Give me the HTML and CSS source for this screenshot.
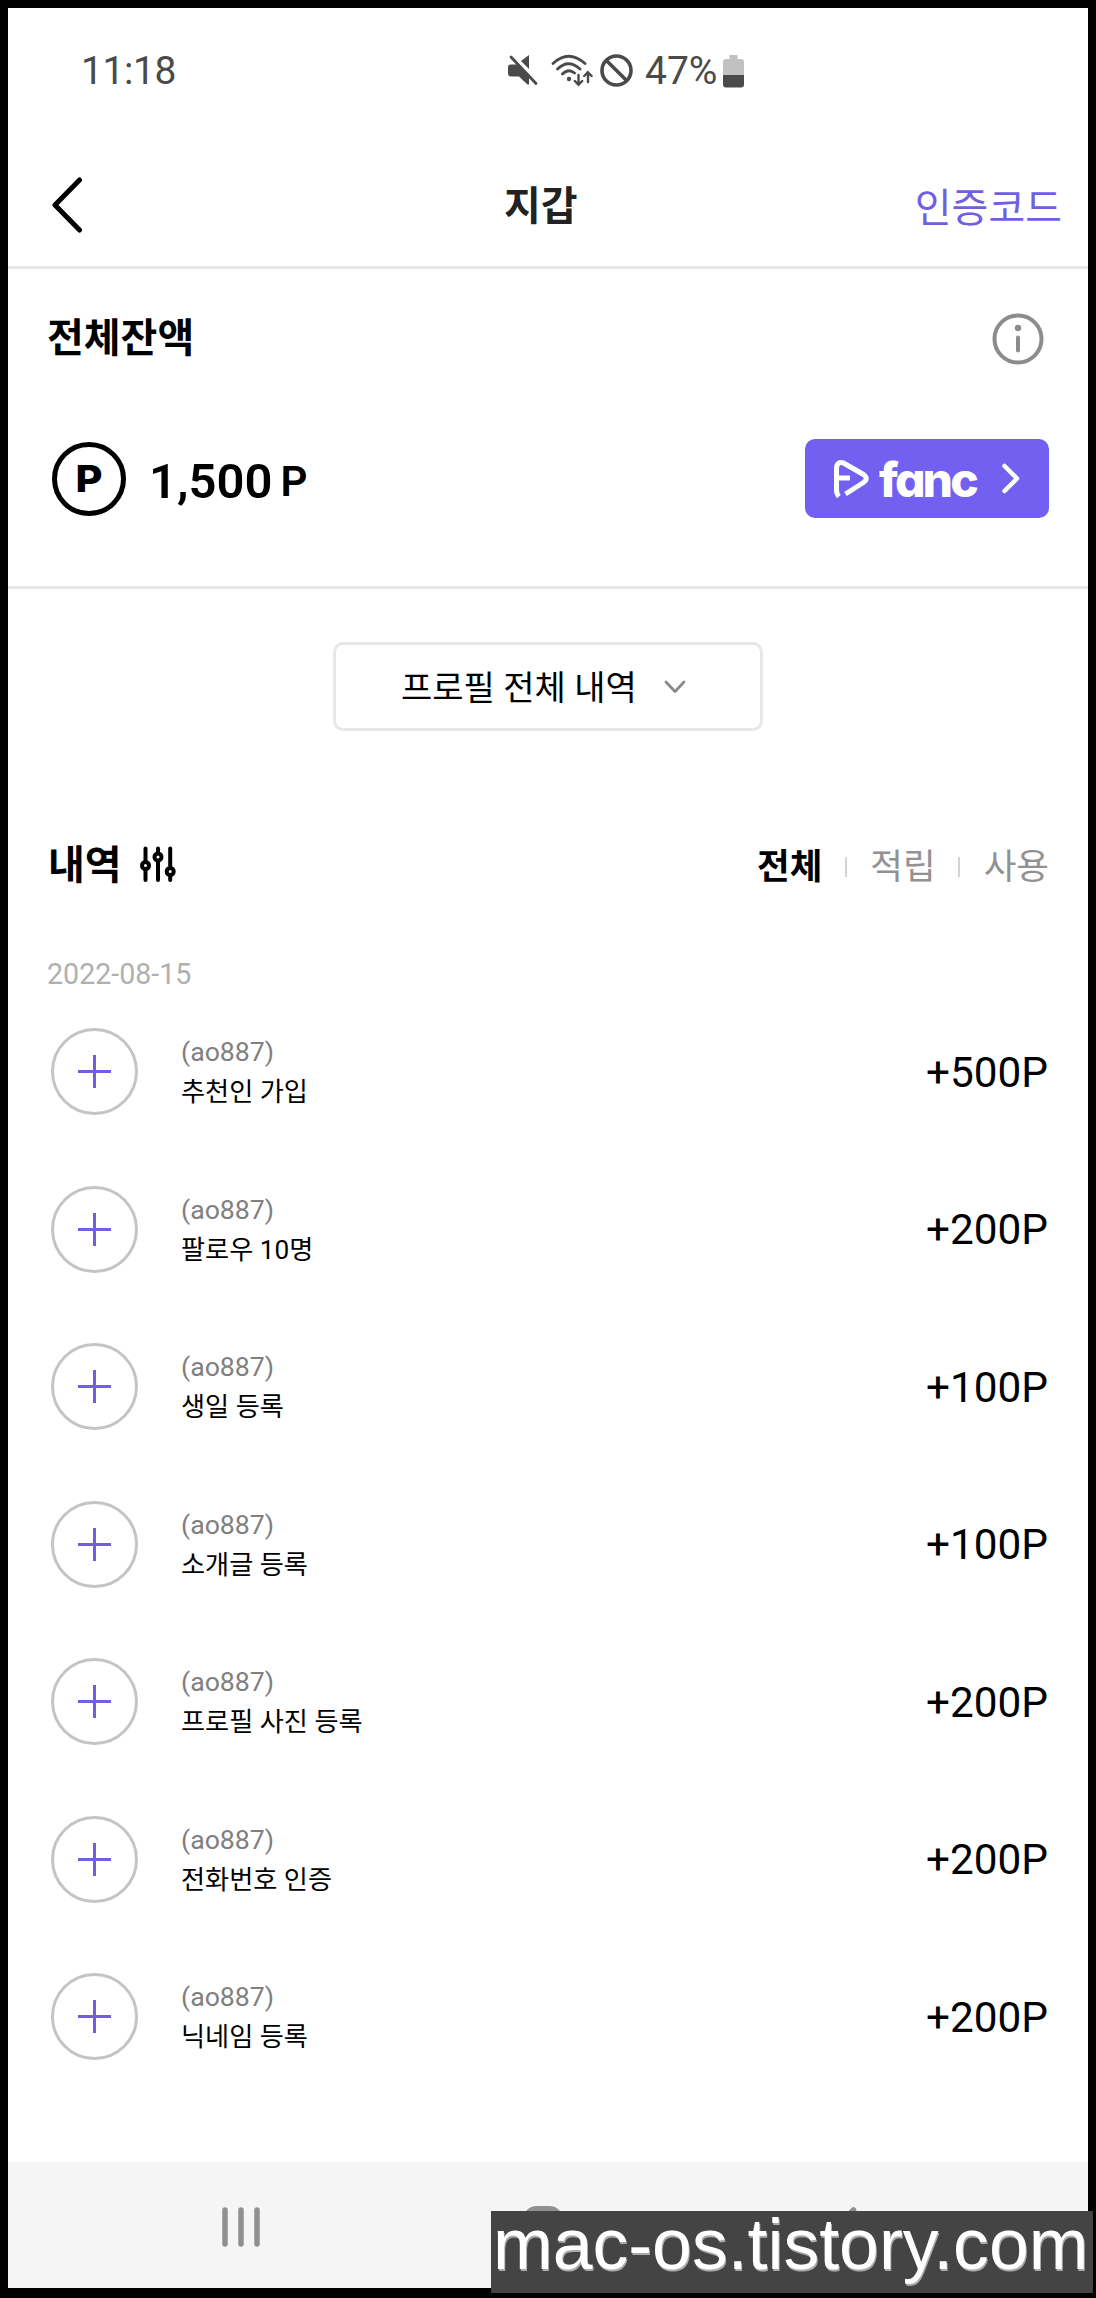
FILE: index.html
```html
<!DOCTYPE html>
<html lang="ko">
<head>
  <meta charset="UTF-8">
  <meta name="viewport" content="width=device-width, initial-scale=1.0">
  <title>지갑</title>
  <link rel="stylesheet" href="styles.css">
</head>
<body>
  <div class="phone">
    <div class="status-bar">
      <span class="time">11:18</span>
      <div class="status-icons">
        <svg class="icon-mute" width="30" height="32" viewBox="0 0 30 32" fill="#4a4a4a">
          <path d="M21 1v14L13 7z"/>
          <path d="M2.500 10.500H10L21 22v8.500h-1.500L11 22.500H3A3 3 0 0 1 0 19.500V13a2.500 2.500 0 0 1 2.500-2.500z"/>
          <path d="M6 3l24 25.500" stroke="#fff" stroke-width="2.500"/>
          <path d="M3 3l25 26.500" stroke="#4a4a4a" stroke-width="2.800" stroke-linecap="round"/>
        </svg>
        <svg class="icon-wifi" width="42" height="34" viewBox="0 0 42 34" fill="none" stroke="#4a4a4a" stroke-width="2.800" stroke-linecap="round">
          <path d="M2 10.500Q17.500-4 34 10.500M6.500 16Q17.500 5.500 29 16M11.500 21Q17.500 15 23.500 20"/>
          <circle cx="18" cy="26" r="2.200" fill="#4a4a4a" stroke="none"/>
          <path d="M27.500 22v9M23.800 28l3.700 3.700 3.700-3.700M37 29V20M33.200 23l3.700-3.700 3.700 3.700" stroke-width="2.400"/>
        </svg>
        <svg class="icon-ban" width="33" height="33" viewBox="0 0 33 33" fill="none" stroke="#4a4a4a" stroke-width="3.600">
          <circle cx="16.500" cy="16.500" r="14.500"/>
          <path d="M6.200 6.200l20.600 20.600"/>
        </svg>
        <span class="percent">47%</span>
        <svg class="icon-battery" width="21" height="33" viewBox="0 0 21 33">
          <path d="M6.500 0h8v4H18a3 3 0 0 1 3 3v13H0V7a3 3 0 0 1 3-3h3.500z" fill="#c1c1c1"/>
          <path d="M0 20h21v9.500a3 3 0 0 1-3 3H3a3 3 0 0 1-3-3z" fill="#4a4a4a"/>
        </svg>
      </div>
    </div>

    <header class="header">
      <svg width="31" height="56" viewBox="0 0 31 56" fill="none" stroke="#000" stroke-width="5" stroke-linecap="round" stroke-linejoin="round">
        <path d="M27.500 3L3 28l24.500 25"/>
      </svg>
      <h1>지갑</h1>
      <a class="code-link">인증코드</a>
    </header>

    <section class="balance">
      <div class="balance-title">
        <h2>전체잔액</h2>
        <svg width="52" height="52" viewBox="0 0 52 52" fill="none" stroke="#8c8c8c" stroke-width="4">
          <circle cx="26" cy="26" r="23.500"/>
          <circle cx="26" cy="15" r="3.200" fill="#8c8c8c" stroke="none"/>
          <path d="M26 24.500v13" stroke-linecap="round"/>
        </svg>
      </div>
      <div class="balance-row">
        <div class="coin"><span>P</span></div>
        <div class="amount">1,500<small>P</small></div>
        <button class="fanc-btn">
          <svg class="fanc-logo" width="35" height="38" viewBox="0 0 35 38" fill="none" stroke="#fff" stroke-width="5" stroke-linejoin="round">
            <path d="M5 36.500C3 34.500 2.500 33 2.500 30V8Q3 1 9.500 3L29.500 14.500Q35 18.500 29.500 22.500L11.500 34M3 18H16"/>
          </svg>
          <span class="fanc-name">fanc</span>
          <svg class="fanc-arrow" width="18" height="31" viewBox="0 0 18 31" fill="none" stroke="#fff" stroke-width="4.500" stroke-linecap="round" stroke-linejoin="round">
            <path d="M2.500 3L15 15.500 2.500 28"/>
          </svg>
        </button>
      </div>
    </section>

    <button class="profile-select">
      프로필 전체 내역
      <svg width="22" height="14" viewBox="0 0 22 14" fill="none" stroke="#888" stroke-width="2.700" stroke-linecap="round" stroke-linejoin="round">
        <path d="M2 2l9 9.500L20 2"/>
      </svg>
    </button>

    <div class="history-header">
      <h2>내역</h2>
      <svg width="36" height="37" viewBox="0 0 36 37" fill="#fff" stroke="#000" stroke-width="4" stroke-linecap="round">
        <path d="M5.500 2.500v31.500M18 2.500v31.500M30.200 2.500v31.500"/>
        <circle cx="5.500" cy="19.500" r="3.500"/>
        <circle cx="18" cy="11" r="3.500"/>
        <circle cx="30.200" cy="25.500" r="3.500"/>
      </svg>
      <div class="tabs">
        <span class="active">전체</span>
        <span>적립</span>
        <span>사용</span>
      </div>
    </div>

    <div class="date">2022-08-15</div>

    <div class="list">
      <div class="item">
        <div class="plus"></div>
        <div class="desc"><span class="user">(ao887)</span>추천인 가입</div>
        <div class="point">+500P</div>
      </div>
      <div class="item">
        <div class="plus"></div>
        <div class="desc"><span class="user">(ao887)</span>팔로우 10명</div>
        <div class="point">+200P</div>
      </div>
      <div class="item">
        <div class="plus"></div>
        <div class="desc"><span class="user">(ao887)</span>생일 등록</div>
        <div class="point">+100P</div>
      </div>
      <div class="item">
        <div class="plus"></div>
        <div class="desc"><span class="user">(ao887)</span>소개글 등록</div>
        <div class="point">+100P</div>
      </div>
      <div class="item">
        <div class="plus"></div>
        <div class="desc"><span class="user">(ao887)</span>프로필 사진 등록</div>
        <div class="point">+200P</div>
      </div>
      <div class="item">
        <div class="plus"></div>
        <div class="desc"><span class="user">(ao887)</span>전화번호 인증</div>
        <div class="point">+200P</div>
      </div>
      <div class="item">
        <div class="plus"></div>
        <div class="desc"><span class="user">(ao887)</span>닉네임 등록</div>
        <div class="point">+200P</div>
      </div>
    </div>

    <nav class="nav-bar">
      <svg width="38" height="40" viewBox="0 0 38 40" stroke="#909090" stroke-width="5.500" stroke-linecap="round">
        <path d="M3 3v34M19 3v34M35 3v34"/>
      </svg>
      <svg width="42" height="42" viewBox="0 0 42 42" fill="none" stroke="#909090" stroke-width="6">
        <rect x="3" y="3" width="36" height="36" rx="12"/>
      </svg>
      <svg width="24" height="40" viewBox="0 0 24 40" fill="none" stroke="#909090" stroke-width="5.500" stroke-linecap="round" stroke-linejoin="round">
        <path d="M20.500 3L3.500 20l17 17"/>
      </svg>
    </nav>
  </div>
  <div class="watermark">mac-os.tistory.com</div>
</body>
</html>
```

FILE: styles.css
```css
:root {
  --purple: #7460f0;
  --text-purple: #715fe3;
  --line: #e8e8e8;
  --gray: #929292;
}

* {
  box-sizing: border-box;
}

body {
  margin: 0;
  position: relative;
  background-color: #000;
  color: #000;
  font-family: Roboto, "Noto Sans CJK KR", sans-serif;
}

h1,
h2 {
  margin: 0;
  font-size: 40px;
  line-height: 52px;
  font-weight: bold;
}

button {
  padding: 0;
  border: none;
  font-family: inherit;
  color: inherit;
}

svg {
  display: block;
  flex: none;
}

.phone {
  display: flex;
  flex-direction: column;
  height: 2298px;
  border: 8px solid #000;
  border-bottom-width: 10px;
  background-color: #fff;
}

/* status bar */
.status-bar {
  display: flex;
  align-items: center;
  height: 124px;
  padding-left: 73px;
  color: #4a4a4a;
  font-size: 39px;
  line-height: 48px;
}

.time {
  width: 427px;
  padding-top: 2px;
  letter-spacing: -0.4px;
}

.status-icons {
  display: flex;
  align-items: center;
}

.icon-wifi {
  margin-left: 13px;
}

.icon-ban {
  margin-left: 7px;
}

.percent {
  margin-left: 12px;
  width: 78px;
  padding-top: 2px;
}

.icon-battery {
  margin-top: 3px;
}

/* header */
.header {
  display: grid;
  grid-template-columns: 452px 1fr auto;
  align-items: center;
  height: 137px;
  padding: 12px 26px 0 44px;
  border-bottom: 3px solid var(--line);
}

.header h1 {
  padding-top: 3px;
  color: #222;
}

.code-link {
  color: var(--text-purple);
  font-size: 40px;
  line-height: 52px;
  padding-top: 7px;
}

/* balance */
.balance {
  padding: 44px 39px 68px 39px;
  border-bottom: 3px solid var(--line);
}

.balance-title {
  display: flex;
  justify-content: space-between;
  padding-right: 5px;
}

.balance-row {
  display: flex;
  align-items: center;
  margin-top: 74px;
}

.coin {
  display: flex;
  justify-content: center;
  align-items: center;
  width: 74px;
  height: 74px;
  margin-left: 5px;
  border: 5px solid #000;
  border-radius: 50%;
}

.coin span {
  padding-top: 1px;
  font-family: Inter, sans-serif;
  font-size: 37px;
  line-height: 40px;
  font-weight: 800;
  transform: scaleX(1.12);
}

.amount {
  margin-left: 23px;
  padding-top: 6px;
  font-size: 49px;
  line-height: 60px;
  font-weight: 600;
}

.amount small {
  margin-left: 8px;
  font-size: 42px;
  vertical-align: 2px;
}

.fanc-btn {
  display: flex;
  align-items: center;
  width: 244px;
  height: 79px;
  margin-left: auto;
  padding-left: 29px;
  border-radius: 10px;
  background-color: var(--purple);
  color: #fff;
}

.fanc-name {
  width: 112px;
  margin-left: 10px;
  padding-top: 2px;
  font-family: Inter, sans-serif;
  font-feature-settings: "cv11";
  font-size: 48px;
  line-height: 60px;
  font-weight: 800;
  letter-spacing: -2.9px;
  text-align: left;
}

.fanc-arrow {
  margin-left: 11px;
}

/* profile select */
.profile-select {
  display: flex;
  align-items: center;
  align-self: center;
  width: 430px;
  height: 89px;
  margin-top: 53px;
  padding: 2px 0 0 65px;
  border: 3px solid var(--line);
  border-radius: 10px;
  background-color: #fff;
  font-size: 34px;
  line-height: 44px;
}

.profile-select svg {
  margin: -2px 0 0 27px;
}

/* history */
.history-header {
  display: flex;
  align-items: center;
  height: 40px;
  margin-top: 115px;
  padding: 0 39px 0 40px;
}

.history-header svg {
  margin: -4px 0 0 18px;
}

.tabs {
  display: flex;
  margin-left: auto;
  padding-top: 2px;
  font-size: 35.5px;
  line-height: 44px;
  color: var(--gray);
}

.tabs span {
  display: flex;
  align-items: center;
}

.tabs span + span::before {
  content: "";
  width: 2px;
  height: 20px;
  margin: 0 23.5px 0 22.5px;
  background-color: #d4d4d4;
}

.tabs .active {
  color: #000;
  font-weight: bold;
}

.date {
  margin: 70px 0 0 39px;
  color: #b0b0b0;
  font-size: 28.6px;
  line-height: 36px;
}

.list {
  margin-top: 36px;
  padding: 0 40px 0 43px;
}

.item {
  display: flex;
  align-items: center;
  height: 87px;
  margin-bottom: 70.5px;
}

.plus {
  width: 87px;
  height: 87px;
  border: 3px solid #c4c4c4;
  border-radius: 50%;
  background: linear-gradient(var(--text-purple), var(--text-purple)) center / 33px 3px no-repeat,
    linear-gradient(var(--text-purple), var(--text-purple)) center / 3px 33px no-repeat;
}

.desc {
  margin-left: 43px;
  padding-top: 1px;
  font-size: 26.2px;
  line-height: 40px;
}

.user {
  display: block;
  color: #808080;
  font-size: 26.7px;
}

.point {
  margin-left: auto;
  padding-top: 2px;
  font-size: 42.3px;
  line-height: 50px;
}

/* bottom navigation */
.nav-bar {
  display: flex;
  align-items: center;
  height: 126px;
  margin-top: auto;
  padding: 4px 0 0 214px;
  background-color: #f5f5f5;
}

.nav-bar svg:nth-child(2) {
  margin-left: 262px;
}

.nav-bar svg:nth-child(3) {
  margin-left: 269px;
}

.watermark {
  position: absolute;
  right: 3px;
  bottom: 5px;
  width: 602px;
  height: 82px;
  padding-left: 2px;
  background-color: #444;
  color: #fff;
  font-family: "Liberation Sans", sans-serif;
  font-size: 71.6px;
  line-height: 67px;
  white-space: nowrap;
  text-shadow: 1px 2px 0 #aaa;
}
```
